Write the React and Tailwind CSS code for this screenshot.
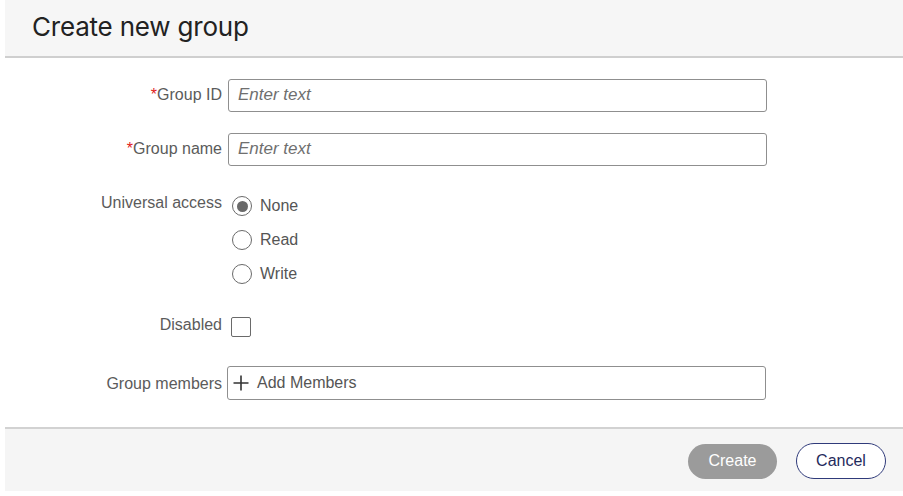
import React, { useState } from "react";

function TextRow({ label, required }) {
  return (
    <div className="flex items-center h-[32px]">
      <div className="w-[223px] pr-[6px] text-right text-[16px] text-[#5b5b5b]">
        {required && <span className="text-[#e0201b]">*</span>}
        {label}
      </div>
      <input
        type="text"
        placeholder="Enter text"
        className="w-[539px] h-[33px] border border-[#8f8f8f] rounded-[3px] px-[9px] text-[17px] italic placeholder:text-[#6f6f6f] outline-none"
      />
    </div>
  );
}

function Radio({ label, checked, onClick }) {
  return (
    <button onClick={onClick} className="flex items-center h-[20px] text-[16px] text-[#555]">
      <span className="w-[20px] h-[20px] rounded-full border border-[#6a6a6a] flex items-center justify-center mr-[8px]">
        {checked && <span className="w-[11px] h-[11px] rounded-full bg-[#6a6a6a]" />}
      </span>
      {label}
    </button>
  );
}

export default function App() {
  const [access, setAccess] = useState("none");
  const [disabled, setDisabled] = useState(false);

  return (
    <div className="w-[903px] h-[496px] bg-white pl-[5px] font-['Liberation_Sans',Arial,sans-serif]">
      <div className="flex flex-col h-[491px]">
        {/* header */}
        <div className="h-[58px] bg-[#f6f6f6] border-b-2 border-[#cfcfcf] flex items-center pl-[27px]">
          <h1 className="text-[26px] text-[#222] font-['Inter',sans-serif] tracking-[-0.2px] leading-none mt-[-2px]">
            Create new group
          </h1>
        </div>

        {/* form */}
        <div className="flex-1 pt-[21px]">
          <TextRow label="Group ID" required />
          <div className="mt-[22px]">
            <TextRow label="Group name" required />
          </div>

          <div className="flex mt-[31px]">
            <div className="w-[223px] pr-[6px] text-right text-[16px] text-[#5b5b5b] leading-[20px] mt-[-3px]">
              Universal access
            </div>
            <div className="flex flex-col gap-[14px] pl-[4px]">
              <Radio label="None" checked={access === "none"} onClick={() => setAccess("none")} />
              <Radio label="Read" checked={access === "read"} onClick={() => setAccess("read")} />
              <Radio label="Write" checked={access === "write"} onClick={() => setAccess("write")} />
            </div>
          </div>

          <div className="flex items-center mt-[32px]">
            <div className="w-[223px] pr-[6px] text-right text-[16px] text-[#5b5b5b] mt-[-3px]">Disabled</div>
            <button
              onClick={() => setDisabled(!disabled)}
              className="ml-[3px] w-[20px] h-[20px] border border-[#6a6a6a] rounded-[2px] bg-white flex items-center justify-center text-[13px] text-[#444]"
            >
              {disabled ? "✓" : ""}
            </button>
          </div>

          <div className="flex items-center mt-[29px]">
            <div className="w-[222px] pr-[5px] text-right text-[16px] text-[#5b5b5b] mt-[2px]">Group members</div>
            <button className="w-[539px] h-[34px] border border-[#8f8f8f] rounded-[3px] flex items-center pl-[4px] text-[16px] text-[#555]">
              <svg width="18" height="18" viewBox="0 0 18 18" className="mr-[7px]">
                <path d="M9 1.5v15M1.5 9h15" stroke="#333" strokeWidth="1.6" />
              </svg>
              Add Members
            </button>
          </div>
        </div>

        {/* footer */}
        <div className="h-[64px] bg-[#f5f5f5] border-t-2 border-[#d2d2d2] flex items-center justify-end pr-[17px] gap-[19px] pt-[2px]">
          <button className="w-[89px] h-[35px] rounded-full bg-[#9b9b9b] text-white text-[16px]">Create</button>
          <button className="w-[90px] h-[36px] rounded-full border border-[#2f3a7a] bg-white text-[#1f2a5c] text-[16px]">
            Cancel
          </button>
        </div>
      </div>
    </div>
  );
}
